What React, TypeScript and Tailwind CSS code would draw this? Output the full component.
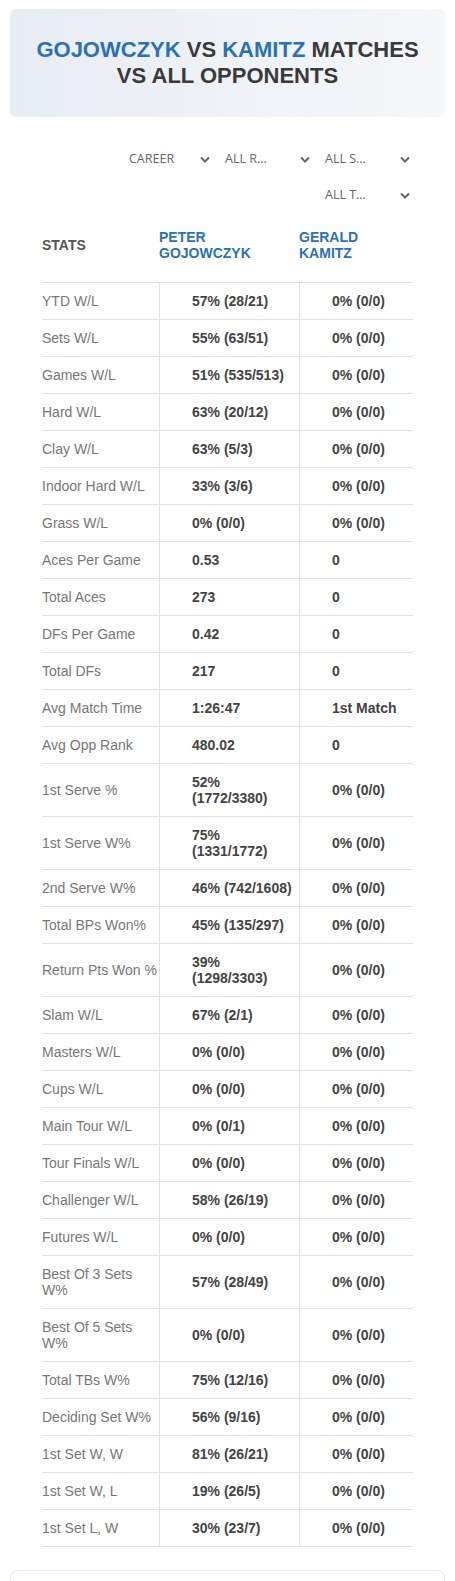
import React from "react";

type Row = { label: string; a: string; b: string };

const rows: Row[] = [
  { label: "YTD W/L", a: "57% (28/21)", b: "0% (0/0)" },
  { label: "Sets W/L", a: "55% (63/51)", b: "0% (0/0)" },
  { label: "Games W/L", a: "51% (535/513)", b: "0% (0/0)" },
  { label: "Hard W/L", a: "63% (20/12)", b: "0% (0/0)" },
  { label: "Clay W/L", a: "63% (5/3)", b: "0% (0/0)" },
  { label: "Indoor Hard W/L", a: "33% (3/6)", b: "0% (0/0)" },
  { label: "Grass W/L", a: "0% (0/0)", b: "0% (0/0)" },
  { label: "Aces Per Game", a: "0.53", b: "0" },
  { label: "Total Aces", a: "273", b: "0" },
  { label: "DFs Per Game", a: "0.42", b: "0" },
  { label: "Total DFs", a: "217", b: "0" },
  { label: "Avg Match Time", a: "1:26:47", b: "1st Match" },
  { label: "Avg Opp Rank", a: "480.02", b: "0" },
  { label: "1st Serve %", a: "52% (1772/3380)", b: "0% (0/0)" },
  { label: "1st Serve W%", a: "75% (1331/1772)", b: "0% (0/0)" },
  { label: "2nd Serve W%", a: "46% (742/1608)", b: "0% (0/0)" },
  { label: "Total BPs Won%", a: "45% (135/297)", b: "0% (0/0)" },
  { label: "Return Pts Won %", a: "39% (1298/3303)", b: "0% (0/0)" },
  { label: "Slam W/L", a: "67% (2/1)", b: "0% (0/0)" },
  { label: "Masters W/L", a: "0% (0/0)", b: "0% (0/0)" },
  { label: "Cups W/L", a: "0% (0/0)", b: "0% (0/0)" },
  { label: "Main Tour W/L", a: "0% (0/1)", b: "0% (0/0)" },
  { label: "Tour Finals W/L", a: "0% (0/0)", b: "0% (0/0)" },
  { label: "Challenger W/L", a: "58% (26/19)", b: "0% (0/0)" },
  { label: "Futures W/L", a: "0% (0/0)", b: "0% (0/0)" },
  { label: "Best Of 3 Sets W%", a: "57% (28/49)", b: "0% (0/0)" },
  { label: "Best Of 5 Sets W%", a: "0% (0/0)", b: "0% (0/0)" },
  { label: "Total TBs W%", a: "75% (12/16)", b: "0% (0/0)" },
  { label: "Deciding Set W%", a: "56% (9/16)", b: "0% (0/0)" },
  { label: "1st Set W, W", a: "81% (26/21)", b: "0% (0/0)" },
  { label: "1st Set W, L", a: "19% (26/5)", b: "0% (0/0)" },
  { label: "1st Set L, W", a: "30% (23/7)", b: "0% (0/0)" },
];

const Chevron = () => (
  <svg width="10" height="7" viewBox="0 0 10 7" fill="none">
    <polyline points="1,1.5 5,5.5 9,1.5" stroke="#666" strokeWidth="2" />
  </svg>
);

const Select = ({ text, w }: { text: string; w: string }) => (
  <div className={`flex h-[36px] items-center justify-between pl-3 pr-[3px] ${w}`}>
    <span className="text-[12.5px] text-[#666]" style={{ fontFamily: '"Open Sans", sans-serif' }}>
      {text}
    </span>
    <Chevron />
  </div>
);

const App = () => {
  return (
    <div className="min-h-[1581px] w-full bg-white pt-[9px] font-['Liberation_Sans',Arial,sans-serif]">
      <div className="mx-[10px] flex h-[108px] items-center justify-center rounded-md bg-gradient-to-r from-[#e8edf3] to-[#f5f7fa] px-6 text-center text-[22px] font-bold leading-[26.5px] text-[#3a3a3a]">
        <h1>
          <span className="text-[#2a72b5]">GOJOWCZYK</span> VS{" "}
          <span className="text-[#2a72b5]">KAMITZ</span> MATCHES
          <br />
          VS ALL OPPONENTS
        </h1>
      </div>

      <div className="mr-[42px] ml-auto mt-[24px] flex w-[300px] flex-wrap justify-end">
        <Select text="CAREER" w="w-[96px]" />
        <Select text="ALL R…" w="w-[100px]" />
        <Select text="ALL S…" w="w-[100px]" />
        <Select text="ALL T…" w="w-[100px]" />
      </div>

      <div className="mx-[42px] text-[14px] leading-4">
        <div className="grid grid-cols-[117px_140px_114px] items-center pt-[16px] pb-[21px] font-bold">
          <div className="text-[#555]">STATS</div>
          <div className="text-[#2a72b5]">
            PETER
            <br />
            GOJOWCZYK
          </div>
          <div className="text-[#2a72b5]">
            GERALD
            <br />
            KAMITZ
          </div>
        </div>
        <div className="border-b border-[#e2e2e2]">
          {rows.map((r) => (
            <div
              key={r.label}
              className="grid grid-cols-[117px_140px_114px] border-t border-[#e2e2e2]"
            >
              <div className="flex items-center py-[10px] text-[#777]">{r.label}</div>
              <div className="flex items-center border-l border-[#e2e2e2] py-[10px] pl-[32px] pr-[2px] font-bold text-[#444]">
                {r.a}
              </div>
              <div className="flex items-center border-l border-[#e2e2e2] py-[10px] pl-[32px] font-bold text-[#444]">
                {r.b}
              </div>
            </div>
          ))}
        </div>
      </div>

      <div className="mx-[10px] mt-[23px] h-[12px] rounded-t-lg border border-b-0 border-[#ececec]" />
    </div>
  );
};

export default App;
